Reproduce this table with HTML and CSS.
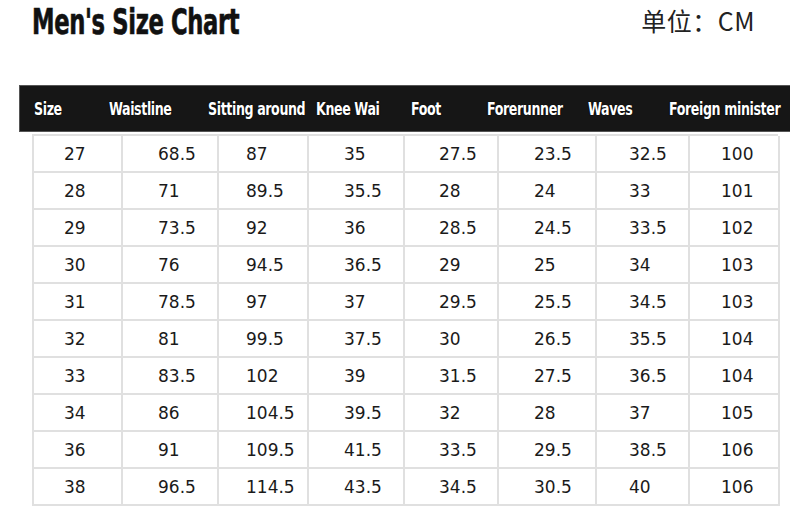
FILE: index.html
```html
<!DOCTYPE html>
<html>
<head>
<meta charset="utf-8">
<link rel="stylesheet" href="styles.css">
</head>
<body>
<div class="top">
  <h1 class="title">Men's Size Chart</h1>
  <div class="unit">单位：CM</div>
</div>
<div class="headbar">
  <span>Size</span>
  <span>Waistline</span>
  <span>Sitting around</span>
  <span>Knee Wai</span>
  <span>Foot</span>
  <span>Forerunner</span>
  <span>Waves</span>
  <span>Foreign minister</span>
</div>
<div class="grid">
  <div>27</div><div>68.5</div><div>87</div><div>35</div><div>27.5</div><div>23.5</div><div>32.5</div><div>100</div>
  <div>28</div><div>71</div><div>89.5</div><div>35.5</div><div>28</div><div>24</div><div>33</div><div>101</div>
  <div>29</div><div>73.5</div><div>92</div><div>36</div><div>28.5</div><div>24.5</div><div>33.5</div><div>102</div>
  <div>30</div><div>76</div><div>94.5</div><div>36.5</div><div>29</div><div>25</div><div>34</div><div>103</div>
  <div>31</div><div>78.5</div><div>97</div><div>37</div><div>29.5</div><div>25.5</div><div>34.5</div><div>103</div>
  <div>32</div><div>81</div><div>99.5</div><div>37.5</div><div>30</div><div>26.5</div><div>35.5</div><div>104</div>
  <div>33</div><div>83.5</div><div>102</div><div>39</div><div>31.5</div><div>27.5</div><div>36.5</div><div>104</div>
  <div>34</div><div>86</div><div>104.5</div><div>39.5</div><div>32</div><div>28</div><div>37</div><div>105</div>
  <div>36</div><div>91</div><div>109.5</div><div>41.5</div><div>33.5</div><div>29.5</div><div>38.5</div><div>106</div>
  <div>38</div><div>96.5</div><div>114.5</div><div>43.5</div><div>34.5</div><div>30.5</div><div>40</div><div>106</div>
</div>
</body>
</html>
```
FILE: styles.css
```css
* { box-sizing: border-box; }
html, body { margin: 0; padding: 0; background: #fff; }
body { width: 790px; height: 511px; overflow: hidden; }

.top {
  display: flex;
  justify-content: space-between;
  align-items: flex-start;
  height: 85px;
  padding: 2px 35px 0 32px;
}
.title {
  margin: 0;
  font-family: "DejaVu Sans Condensed", "Liberation Sans", sans-serif;
  font-weight: bold;
  font-size: 35px;
  line-height: 40px;
  color: #111;
  letter-spacing: -0.5px;
  transform: scaleX(0.72);
  transform-origin: left center;
  white-space: nowrap;
  -webkit-text-stroke: 0.6px #111;
}
.unit {
  font-family: "Noto Sans CJK SC", "Noto Sans", sans-serif;
  font-size: 25px;
  line-height: 36px;
  letter-spacing: 0.5px;
  color: #222;
}

.headbar {
  margin-left: 19px;
  height: 47px;
  background: #161616;
  border: 1px solid #555;
  border-right: none;
  display: grid;
  grid-template-columns: 75px 99px 108px 95px 76px 101px 81px 1fr;
  align-items: center;
  padding-left: 14px;
  font-family: "DejaVu Sans Condensed", "Liberation Sans", sans-serif;
  font-weight: bold;
  font-size: 18px;
  letter-spacing: -0.5px;
  color: #fff;
  text-shadow: 0 0 1px #000, 0 0 1px #000;
  white-space: nowrap;
}
.headbar > span {
  display: inline-block;
  transform: scaleX(0.78);
  transform-origin: left center;
}

.grid {
  margin: 2px 0 0 32px;
  width: 746px;
  display: grid;
  grid-template-columns: 89px 96px 90px 96px 94px 98px 93px 90px;
  grid-auto-rows: 37px;
  border-top: 2px solid #e0e0e0;
  border-left: 2px solid #e0e0e0;
  font-family: "DejaVu Sans", sans-serif;
  font-size: 17px;
  color: #1a1a1a;
}
.grid > div {
  border-right: 2px solid #e0e0e0;
  border-bottom: 2px solid #e0e0e0;
  display: flex;
  align-items: center;
  padding-top: 1px;
}
.grid > div:nth-child(8n+1) { padding-left: 30px; }
.grid > div:nth-child(8n+2) { padding-left: 35px; }
.grid > div:nth-child(8n+3) { padding-left: 27px; }
.grid > div:nth-child(8n+4) { padding-left: 35px; }
.grid > div:nth-child(8n+5) { padding-left: 34px; }
.grid > div:nth-child(8n+6) { padding-left: 35px; }
.grid > div:nth-child(8n+7) { padding-left: 32px; }
.grid > div:nth-child(8n+8) { padding-left: 31px; }
```
